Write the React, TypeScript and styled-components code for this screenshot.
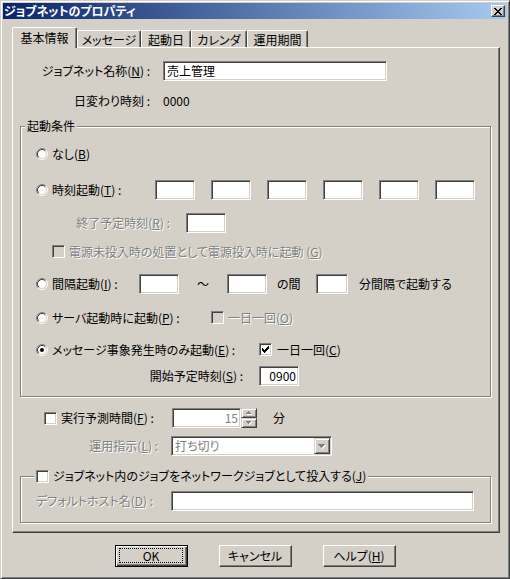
import React from "react";
import styled, { createGlobalStyle } from "styled-components";

const FACE = "#D4D0C8";
const SHADOW = "#808080";
const DARK = "#404040";

const Global = createGlobalStyle`
  html, body { margin: 0; padding: 0; background: ${FACE}; }
  body {
    font-family: "Noto Sans CJK JP", "Noto Sans", sans-serif;
    font-size: 12px;
    line-height: 14px;
    color: #000;
    font-feature-settings: "palt" 1;
  }
  * { box-sizing: border-box; }
`;

const Window = styled.div`
  width: 510px;
  height: 579px;
  background: ${FACE};
  border: 1px solid;
  border-color: ${FACE} ${DARK} ${DARK} ${FACE};
  box-shadow: inset 1px 1px #fff, inset -1px -1px ${SHADOW};
  padding: 2px;
  display: flex;
  flex-direction: column;
`;

const TitleBar = styled.div`
  height: 16px;
  flex-shrink: 0;
  display: flex;
  align-items: center;
  justify-content: space-between;
  padding: 0 2px 0 1px;
  background: linear-gradient(to right, #0a246a, #a6caf0);
`;

const TitleText = styled.span`
  color: #fff;
  font-weight: bold;
  font-size: 12px;
  line-height: 14px;
  white-space: nowrap;
`;

const CloseButton = styled.div`
  width: 14px;
  height: 12px;
  background: ${FACE};
  border: 1px solid;
  border-color: #fff ${DARK} ${DARK} #fff;
  box-shadow: inset -1px -1px ${SHADOW};
  display: flex;
  align-items: center;
  justify-content: center;
`;

const Body = styled.div`
  display: flex;
  flex-direction: column;
  padding-left: 9px;
`;

const TabStrip = styled.div`
  display: flex;
  align-items: flex-end;
  height: 20px;
  margin-top: 8px;
  position: relative;
  z-index: 1;
`;

const Tab = styled.div<{ $w: number; $active?: boolean }>`
  width: ${(p) => p.$w}px;
  height: ${(p) => (p.$active ? 21 : 17)}px;
  margin-bottom: ${(p) => (p.$active ? -1 : 0)}px;
  background: ${FACE};
  border-top: 1px solid #fff;
  border-left: 1px solid #fff;
  border-right: 1px solid ${DARK};
  border-radius: 2px 2px 0 0;
  box-shadow: inset -1px 0 ${SHADOW};
  display: flex;
  justify-content: center;
  padding-top: ${(p) => (p.$active ? 3 : 2)}px;
  white-space: nowrap;
  flex-shrink: 0;
`;

const Panel = styled.div`
  width: 488px;
  height: 486px;
  border: 1px solid;
  border-color: #fff ${DARK} ${DARK} #fff;
  box-shadow: inset -1px -1px ${SHADOW};
  display: flex;
  flex-direction: column;
  align-items: flex-start;
`;

const Row = styled.div<{ $top: number; $h: number; $left?: number }>`
  display: flex;
  align-items: center;
  margin-top: ${(p) => p.$top}px;
  margin-left: ${(p) => p.$left ?? 0}px;
  height: ${(p) => p.$h}px;
  flex-shrink: 0;
  white-space: nowrap;
`;

const RightLabel = styled.div<{ $w: number; $muted?: boolean }>`
  width: ${(p) => p.$w}px;
  flex-shrink: 0;
  text-align: right;
  white-space: nowrap;
  color: ${(p) => (p.$muted ? SHADOW : "#000")};
  text-shadow: ${(p) => (p.$muted ? "1px 1px 0 #fff" : "none")};
`;

const LeftLabel = styled.div<{ $w: number; $pad?: number; $muted?: boolean }>`
  width: ${(p) => p.$w}px;
  padding-left: ${(p) => p.$pad ?? 0}px;
  flex-shrink: 0;
  white-space: nowrap;
  color: ${(p) => (p.$muted ? SHADOW : "#000")};
  text-shadow: ${(p) => (p.$muted ? "1px 1px 0 #fff" : "none")};
`;

const Text = styled.span<{ $ml?: number; $w?: number; $muted?: boolean; $center?: boolean }>`
  margin-left: ${(p) => p.$ml ?? 0}px;
  width: ${(p) => (p.$w ? `${p.$w}px` : "auto")};
  flex-shrink: 0;
  text-align: ${(p) => (p.$center ? "center" : "left")};
  white-space: nowrap;
  color: ${(p) => (p.$muted ? SHADOW : "#000")};
  text-shadow: ${(p) => (p.$muted ? "1px 1px 0 #fff" : "none")};
`;

const Field = styled.div<{ $w: number; $ml?: number; $right?: boolean; $dim?: boolean }>`
  width: ${(p) => p.$w}px;
  height: 20px;
  margin-left: ${(p) => p.$ml ?? 0}px;
  flex-shrink: 0;
  background: #fff;
  border: 1px solid;
  border-color: ${SHADOW} #fff #fff ${SHADOW};
  box-shadow: inset 1px 1px ${DARK}, inset -1px -1px ${FACE};
  display: flex;
  align-items: center;
  justify-content: ${(p) => (p.$right ? "flex-end" : "flex-start")};
  padding: 0 2px 0 3px;
  color: ${(p) => (p.$dim ? SHADOW : "#000")};
  white-space: nowrap;
  position: relative;
`;

const Choice = styled.div<{ $w?: number; $gap?: number; $muted?: boolean }>`
  display: flex;
  align-items: center;
  gap: ${(p) => p.$gap ?? 4}px;
  width: ${(p) => (p.$w ? `${p.$w}px` : "auto")};
  flex-shrink: 0;
  white-space: nowrap;
  color: ${(p) => (p.$muted ? SHADOW : "#000")};
  text-shadow: ${(p) => (p.$muted ? "1px 1px 0 #fff" : "none")};
`;

const CheckBox = styled.div<{ $disabled?: boolean }>`
  width: 13px;
  height: 13px;
  flex-shrink: 0;
  background: ${(p) => (p.$disabled ? FACE : "#fff")};
  border: 1px solid;
  border-color: ${SHADOW} #fff #fff ${SHADOW};
  box-shadow: inset 1px 1px ${DARK}, inset -1px -1px ${FACE};
  display: flex;
  align-items: center;
  justify-content: center;
  text-shadow: none;
`;

const Group = styled.div<{ $top: number; $h: number }>`
  position: relative;
  margin-top: ${(p) => p.$top}px;
  margin-left: 7px;
  width: 471px;
  height: ${(p) => p.$h}px;
  flex-shrink: 0;
  border: 1px solid ${SHADOW};
  box-shadow: inset 1px 1px #fff, 1px 1px #fff;
  display: flex;
  flex-direction: column;
  align-items: flex-start;
`;

const Legend = styled.div<{ $left: number; $top: number }>`
  position: absolute;
  left: ${(p) => p.$left}px;
  top: ${(p) => p.$top}px;
  padding: 0 2px;
  background: ${FACE};
  display: flex;
  align-items: center;
  gap: 4px;
  height: 14px;
  white-space: nowrap;
`;

const SpinBox = styled.div`
  display: flex;
  flex-direction: column;
  flex-shrink: 0;
  width: 16px;
  height: 20px;
`;

const SpinBtn = styled.div`
  width: 16px;
  height: 10px;
  background: ${FACE};
  border: 1px solid;
  border-color: ${FACE} ${DARK} ${DARK} ${FACE};
  box-shadow: inset 1px 1px #fff, inset -1px -1px ${SHADOW};
  display: flex;
  align-items: center;
  justify-content: center;
`;

const Combo = styled(Field)`
  padding-right: 0;
  justify-content: space-between;
`;

const DropBtn = styled.div`
  width: 16px;
  height: 16px;
  background: ${FACE};
  border: 1px solid;
  border-color: ${FACE} ${DARK} ${DARK} ${FACE};
  box-shadow: inset 1px 1px #fff, inset -1px -1px ${SHADOW};
  display: flex;
  align-items: center;
  justify-content: center;
  margin-right: 1px;
`;

const ButtonRow = styled.div`
  display: flex;
  justify-content: center;
  gap: 31px;
  margin-top: 12px;
`;

const Button = styled.div<{ $default?: boolean }>`
  position: relative;
  width: 73px;
  height: 22px;
  background: ${FACE};
  border: 1px solid;
  border-color: ${(p) => (p.$default ? "#000" : `#fff ${DARK} ${DARK} #fff`)};
  box-shadow: ${(p) =>
    p.$default
      ? `inset 1px 1px #fff, inset -1px -1px ${DARK}, inset -2px -2px ${SHADOW}`
      : `inset -1px -1px ${SHADOW}`};
  display: flex;
  align-items: center;
  justify-content: center;
  white-space: nowrap;
  &::after {
    content: "";
    display: ${(p) => (p.$default ? "block" : "none")};
    position: absolute;
    left: 3px;
    right: 4px;
    top: 2px;
    bottom: 3px;
    border: 1px dotted #000;
  }
`;

const U = styled.span`
  text-decoration: underline;
  text-underline-offset: 1px;
`;

const Pixels = ({ rows, color }: { rows: string[]; color: string }) => (
  <svg
    width={rows[0].length}
    height={rows.length}
    viewBox={`0 0 ${rows[0].length} ${rows.length}`}
    shapeRendering="crispEdges"
    style={{ display: "block" }}
  >
    {rows.map((r, y) =>
      r.split("").map((c, x) =>
        c === "X" ? <rect key={`${x}-${y}`} x={x} y={y} width={1} height={1} fill={color} /> : null
      )
    )}
  </svg>
);

const CloseGlyph = () => (
  <Pixels
    color="#000"
    rows={["XX....XX", ".XX..XX.", "..XXXX..", "...XX...", "..XXXX..", ".XX..XX.", "XX....XX"]}
  />
);

const CheckGlyph = () => (
  <Pixels
    color="#000"
    rows={["......X", ".....XX", "X...XXX", "XX.XXX.", "XXXXX..", ".XXX...", "..X...."]}
  />
);

const Arrow = ({ rows }: { rows: string[] }) => (
  <svg
    width={rows[0].length + 1}
    height={rows.length + 1}
    shapeRendering="crispEdges"
    style={{ display: "block" }}
  >
    {rows.map((r, y) =>
      r.split("").map((c, x) =>
        c === "X" ? <rect key={`s${x}-${y}`} x={x + 1} y={y + 1} width={1} height={1} fill="#fff" /> : null
      )
    )}
    {rows.map((r, y) =>
      r.split("").map((c, x) =>
        c === "X" ? <rect key={`${x}-${y}`} x={x} y={y} width={1} height={1} fill={SHADOW} /> : null
      )
    )}
  </svg>
);

const RadioIcon = ({ checked }: { checked?: boolean }) => (
  <svg width="12" height="12" viewBox="0 0 12 12" style={{ display: "block", flexShrink: 0 }}>
    <circle cx="6" cy="6" r="4.5" fill="#fff" />
    <path d="M2.11 9.89 A5.5 5.5 0 0 1 9.89 2.11" fill="none" stroke={SHADOW} />
    <path d="M9.89 2.11 A5.5 5.5 0 0 1 2.11 9.89" fill="none" stroke="#fff" />
    <path d="M2.82 9.18 A4.5 4.5 0 0 1 9.18 2.82" fill="none" stroke={DARK} />
    <path d="M9.18 2.82 A4.5 4.5 0 0 1 2.82 9.18" fill="none" stroke={FACE} />
    {checked && <circle cx="6" cy="6" r="2" fill="#000" />}
  </svg>
);

const Check = ({ checked, disabled }: { checked?: boolean; disabled?: boolean }) => (
  <CheckBox $disabled={disabled}>{checked && <CheckGlyph />}</CheckBox>
);

const tabs = [
  { label: "基本情報", w: 65, active: true },
  { label: "メッセージ", w: 64 },
  { label: "起動日", w: 50 },
  { label: "カレンダ", w: 56 },
  { label: "運用期間", w: 61 },
];

export default function App() {
  return (
    <>
      <Global />
      <Window>
        <TitleBar>
          <TitleText>ジョブネットのプロパティ</TitleText>
          <CloseButton>
            <CloseGlyph />
          </CloseButton>
        </TitleBar>
        <Body>
          <TabStrip>
            {tabs.map((t) => (
              <Tab key={t.label} $w={t.w} $active={t.active}>
                {t.label}
              </Tab>
            ))}
          </TabStrip>
          <Panel>
            <Row $top={13} $h={20}>
              <RightLabel $w={137}>
                ジョブネット名称(<U>N</U>) :
              </RightLabel>
              <Field $w={224} $ml={13}>
                売上管理
              </Field>
            </Row>
            <Row $top={10} $h={20}>
              <RightLabel $w={137}>日変わり時刻 :</RightLabel>
              <Text $ml={13}>0000</Text>
            </Row>

            <Group $top={15} $h={271}>
              <Legend $left={4} $top={-8}>
                起動条件
              </Legend>

              <Row $top={19} $h={16} $left={15}>
                <Choice>
                  <RadioIcon />
                  <span>
                    なし(<U>B</U>)
                  </span>
                </Choice>
              </Row>

              <Row $top={18} $h={20} $left={15}>
                <Choice $w={119}>
                  <RadioIcon />
                  <span>
                    時刻起動(<U>T</U>) :
                  </span>
                </Choice>
                {[0, 1, 2, 3, 4, 5].map((i) => (
                  <Field key={i} $w={40} $ml={i === 0 ? 0 : 16} />
                ))}
              </Row>

              <Row $top={13} $h={20}>
                <RightLabel $w={149} $muted>
                  終了予定時刻(<U>R</U>) :
                </RightLabel>
                <Field $w={40} $ml={16} />
              </Row>

              <Row $top={12} $h={13} $left={31}>
                <Choice $muted>
                  <Check disabled />
                  <span>
                    電源未投入時の処置として電源投入時に起動 (<U>G</U>)
                  </span>
                </Choice>
              </Row>

              <Row $top={16} $h={20} $left={15}>
                <Choice $w={103}>
                  <RadioIcon />
                  <span>
                    間隔起動(<U>I</U>) :
                  </span>
                </Choice>
                <Field $w={40} />
                <Text $w={48} $center>
                  ～
                </Text>
                <Field $w={40} />
                <Text $ml={10} $w={39}>
                  の間
                </Text>
                <Field $w={32} />
                <Text $ml={11}>分間隔で起動する</Text>
              </Row>

              <Row $top={17} $h={13} $left={15}>
                <Choice $w={175}>
                  <RadioIcon />
                  <span>
                    サーバ起動時に起動(<U>P</U>) :
                  </span>
                </Choice>
                <Choice $gap={4} $muted>
                  <Check disabled />
                  <span>
                    一日一回(<U>O</U>)
                  </span>
                </Choice>
              </Row>

              <Row $top={19} $h={13} $left={15}>
                <Choice $w={223}>
                  <RadioIcon checked />
                  <span>
                    メッセージ事象発生時のみ起動(<U>E</U>) :
                  </span>
                </Choice>
                <Choice $gap={5}>
                  <Check checked />
                  <span>
                    一日一回(<U>C</U>)
                  </span>
                </Choice>
              </Row>

              <Row $top={10} $h={20}>
                <RightLabel $w={222}>
                  開始予定時刻(<U>S</U>) :
                </RightLabel>
                <Field $w={40} $ml={16} $right>
                  0900
                </Field>
              </Row>
            </Group>

            <Row $top={11} $h={20} $left={31}>
              <Choice $w={128}>
                <Check />
                <span>
                  実行予測時間(<U>F</U>) :
                </span>
              </Choice>
              <Field $w={69} $right $dim>
                15
              </Field>
              <SpinBox>
                <SpinBtn>
                  <Arrow rows={["..X..", ".XXX.", "XXXXX"]} />
                </SpinBtn>
                <SpinBtn>
                  <Arrow rows={["XXXXX", ".XXX.", "..X.."]} />
                </SpinBtn>
              </SpinBox>
              <Text $ml={16}>分</Text>
            </Row>

            <Row $top={8} $h={20}>
              <RightLabel $w={145} $muted>
                運用指示(<U>L</U>) :
              </RightLabel>
              <Combo $w={161} $ml={13} $dim>
                <span>打ち切り</span>
                <DropBtn>
                  <Arrow rows={["XXXXXXX", ".XXXXX.", "..XXX..", "...X..."]} />
                </DropBtn>
              </Combo>
            </Row>

            <Group $top={20} $h={47}>
              <Legend $left={13} $top={-8}>
                <Check />
                <span>
                  ジョブネット内のジョブをネットワークジョブとして投入する(<U>J</U>)
                </span>
              </Legend>
              <Row $top={14} $h={20}>
                <LeftLabel $w={150} $pad={15} $muted>
                  デフォルトホスト名(<U>D</U>) :
                </LeftLabel>
                <Field $w={303} />
              </Row>
            </Group>
          </Panel>
        </Body>
        <ButtonRow>
          <Button $default>OK</Button>
          <Button>キャンセル</Button>
          <Button>
            ヘルプ(<U>H</U>)
          </Button>
        </ButtonRow>
      </Window>
    </>
  );
}
